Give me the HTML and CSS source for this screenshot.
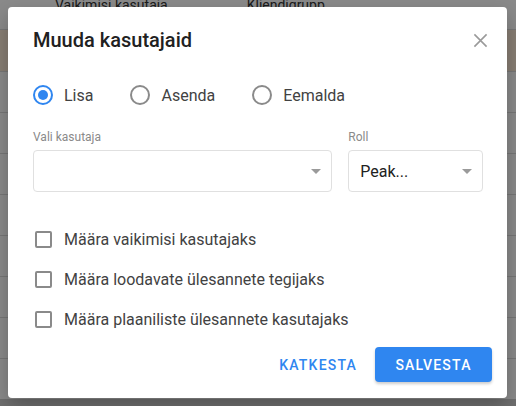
FILE: index.html
```html
<!DOCTYPE html>
<html>
<head>
<meta charset="utf-8">
<link rel="stylesheet" href="styles.css">
</head>
<body>
<div class="page">
  <div class="thead">
    <span class="th th1">Vaikimisi kasutaja</span>
    <span class="th th2">Kliendigrupp</span>
  </div>
  <div class="row row-hl"></div>
  <div class="row"></div>
  <div class="row"></div>
  <div class="row"></div>
  <div class="row"></div>
  <div class="row"></div>
  <div class="row"></div>
  <div class="row"></div>
  <div class="row row-last"></div>
  <div class="foot"></div>
</div>
<div class="overlay"></div>
<div class="dialog">
  <div class="dlg-head">
    <h2 class="dlg-title">Muuda kasutajaid</h2>
    <svg class="close" width="16" height="16" viewBox="0 0 16 16"><path d="M1.5 1.5L14.5 14.5M14.5 1.5L1.5 14.5" stroke="#9a9a9a" stroke-width="1.7" fill="none"/></svg>
  </div>
  <div class="radios">
    <label class="radio"><span class="rc on"></span><span>Lisa</span></label>
    <label class="radio"><span class="rc"></span><span>Asenda</span></label>
    <label class="radio"><span class="rc"></span><span>Eemalda</span></label>
  </div>
  <div class="fields">
    <div class="field f-user">
      <div class="flabel">Vali kasutaja</div>
      <div class="select"><span class="sval"></span><span class="arrow"></span></div>
    </div>
    <div class="field f-role">
      <div class="flabel">Roll</div>
      <div class="select"><span class="sval">Peak...</span><span class="arrow"></span></div>
    </div>
  </div>
  <div class="checks">
    <label class="check"><span class="cb"></span><span>Määra vaikimisi kasutajaks</span></label>
    <label class="check"><span class="cb"></span><span>Määra loodavate ülesannete tegijaks</span></label>
    <label class="check"><span class="cb"></span><span>Määra plaaniliste ülesannete kasutajaks</span></label>
  </div>
  <div class="actions">
    <button class="btn btn-text">KATKESTA</button>
    <button class="btn btn-primary">SALVESTA</button>
  </div>
</div>
</body>
</html>
```
FILE: styles.css
```css
* { box-sizing: border-box; }
html, body { margin: 0; padding: 0; }
body {
  width: 516px;
  height: 406px;
  overflow: hidden;
  position: relative;
  font-family: Roboto, "Liberation Sans", Arial, sans-serif;
  background: #fff;
}
.page { width: 516px; height: 406px; display: flex; flex-direction: column; }
.thead { height: 30px; flex: none; position: relative; border-bottom: 1px solid #ddd; display: flex; }
.th { font-size: 14px; color: #333; line-height: 14px; margin-top: -2px; }
.th1 { margin-left: 55px; }
.th2 { margin-left: 79px; }
.row { height: 41px; border-bottom: 1px solid #ddd; flex: none; }
.row-hl { height: 42px; background: #fbe9d6; }
.row-last { height: 40px; border-bottom: none; }
.foot { flex: 1; background: #cdcdcd; }
.overlay { position: absolute; inset: 0; background: rgba(0,0,0,0.46); }

.dialog {
  position: absolute;
  left: 8px; top: 7px;
  width: 499px; height: 391px;
  background: #fff;
  border-radius: 4px;
  box-shadow: 0 8px 20px rgba(0,0,0,0.25);
  padding: 0 24px 0 25px;
  display: flex;
  flex-direction: column;
}
.dlg-head { display: flex; align-items: center; justify-content: space-between; height: 24px; margin-top: 21px; }
.dlg-title { margin: 0; font-size: 20px; font-weight: 500; color: #212121; line-height: 24px; }
.close { margin-right: -5px; width: 15px; height: 15px; }

.radios { display: flex; margin-top: 28px; height: 30px; align-items: center; }
.radio { display: flex; align-items: center; font-size: 16px; color: #424242; margin-right: 37px; }
.rc {
  width: 20px; height: 20px; border-radius: 50%;
  border: 2px solid #8a8a8a; margin-right: 11px; position: relative; flex: none;
}
.rc.on { border-color: #2f86f0; }
.rc.on::after {
  content: ""; position: absolute; left: 3px; top: 3px; width: 10px; height: 10px;
  border-radius: 50%; background: #2f86f0;
}

.fields { display: flex; gap: 16px; margin-top: 19px; }
.f-user { width: 300px; }
.f-role { width: 135px; }
.flabel { font-size: 12px; color: #8a8a8a; line-height: 16px; margin-bottom: 5px; }
.select {
  height: 42px; border: 1px solid #e0e0e0; border-radius: 4px;
  display: flex; align-items: center; justify-content: space-between;
  padding: 0 10px 0 11px;
}
.sval { font-size: 16px; color: #212121; }
.arrow { width: 0; height: 0; border-left: 5px solid transparent; border-right: 5px solid transparent; border-top: 5px solid #9a9a9a; }

.checks { display: flex; flex-direction: column; margin-top: 27px; }
.check { display: flex; align-items: center; height: 40px; font-size: 16px; color: #424242; }
.cb { width: 17px; height: 17px; border: 2px solid #8a8a8a; border-radius: 2px; margin: 0 12px 0 2px; flex: none; }

.actions { display: flex; justify-content: flex-end; align-items: center; margin-top: 8px; margin-right: -9px; }
.btn { font-family: inherit; font-size: 14px; font-weight: 500; letter-spacing: 1.2px; border: none; border-radius: 4px; height: 35px; cursor: pointer; }
.btn-text { background: transparent; color: #2f86f0; padding: 0 18px 0 8px; }
.btn-primary { background: #2f86f0; color: #fff; width: 117px; padding: 0 16px; box-shadow: 0 2px 3px rgba(0,0,0,0.2); }
```
